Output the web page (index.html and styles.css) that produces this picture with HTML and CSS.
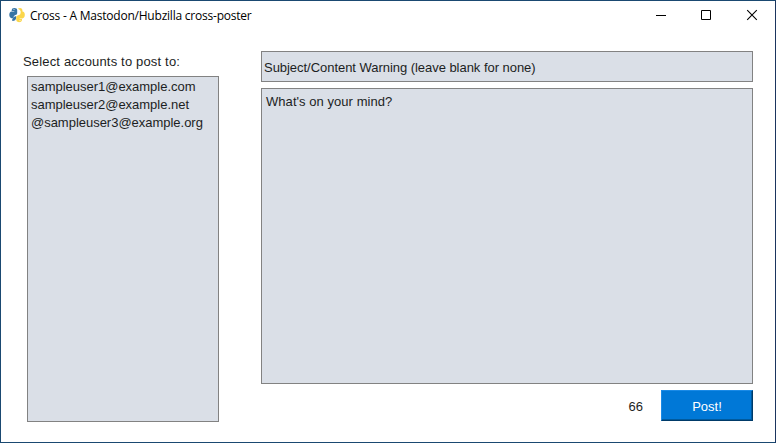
FILE: index.html
```html
<!DOCTYPE html>
<html lang="en">
<head>
<meta charset="utf-8">
<title>Cross - A Mastodon/Hubzilla cross-poster</title>
<link rel="stylesheet" href="styles.css">
</head>
<body>
<div class="window">
  <header class="titlebar">
    <svg class="logo" width="16" height="16" viewBox="0 0 16 16">
      <path fill="#3674a5" d="M2.7 3Q2.7 1 5.3 1Q8.2 1 8.2 3.2V6.2Q8.2 7.6 6.3 8Q4.6 8.6 4.2 11.2H2.6Q.3 10.8.3 7.8Q.3 4.8 2.7 4.5H5.3V4H2.7Z"/>
      <path fill="#3674a5" d="M3.3 12.2Q4.2 9.4 7.2 9V11.2Q6.7 13.8 4 14Q2.4 13.8 3.3 12.2Z"/>
      <path fill="#fbd64b" d="M8.8 1.8Q10.8.6 12.6 1.4Q13.7 2.2 13.5 4.4Q15.8 4.8 15.8 7.8Q15.8 11 13.4 11.4H10.6V12H13V13.2Q12.6 15.2 10 15.2Q7.2 15 7.2 13V10.2Q7.4 8.6 9.2 8.3Q11.8 7.8 11.6 6V4Q11 2.6 8.8 1.8Z"/>
      <circle cx="5" cy="2.6" r=".5" fill="#fff"/>
      <circle cx="11" cy="13.5" r=".5" fill="#fff"/>
    </svg>
    <h1 class="title">Cross - A Mastodon/Hubzilla cross-poster</h1>
    <div class="controls">
      <svg width="46" height="29" viewBox="0 0 46 29"><path d="M19 14.5H29" stroke="#000"/></svg>
      <svg width="46" height="29" viewBox="0 0 46 29"><path d="M18.5 9.5H27.5V18.5H18.5Z" fill="none" stroke="#000"/></svg>
      <svg width="46" height="29" viewBox="0 0 46 29"><path d="M18.2 9.2L27.8 18.8M27.8 9.2L18.2 18.8" stroke="#000" stroke-width="1.1"/></svg>
    </div>
  </header>
  <main class="content">
    <section class="accounts">
      <div class="label">Select accounts to post to:</div>
      <ul class="list">
        <li>sampleuser1@example.com</li>
        <li>sampleuser2@example.net</li>
        <li>@sampleuser3@example.org</li>
      </ul>
    </section>
    <section class="compose">
      <div class="field subject">Subject/Content Warning (leave blank for none)</div>
      <div class="field message">What's on your mind?</div>
      <div class="actions">
        <span class="count">66</span>
        <button class="post">Post!</button>
      </div>
    </section>
  </main>
</div>
</body>
</html>
```

FILE: styles.css
```css
* { box-sizing: border-box; }
body {
  margin: 0;
  font: 13px/18px "Liberation Sans", Arial, sans-serif;
  color: #1c1e23;
}
.window {
  width: 776px;
  height: 443px;
  border: 1px solid #1a4971;
  border-right-color: #1b355f;
  background: #fff;
  overflow: hidden;
}
.titlebar {
  display: flex;
  height: 29px;
  padding-left: 8px;
}
.logo { margin-top: 6px; }
.title {
  margin: 0 0 0 5px;
  font: 12px/29px "Open Sans", "Noto Sans", sans-serif;
  letter-spacing: -0.22px;
  color: #000;
  white-space: nowrap;
}
.controls { display: flex; margin-left: auto; }
.content {
  display: flex;
  justify-content: space-between;
  padding: 21px 22px 0;
}
.accounts { width: 196px; }
.label {
  height: 25px;
  padding-top: 2px;
  letter-spacing: 0.17px;
  white-space: nowrap;
}
.list {
  width: 192px;
  height: 346px;
  margin: 0 0 0 4px;
  padding: 1px 3px;
  list-style: none;
  border: 1px solid #828282;
  background: #dadfe7;
  letter-spacing: -0.02px;
  white-space: nowrap;
}
.compose { width: 492px; }
.field {
  border: 1px solid #828282;
  background: #dadfe7;
  white-space: nowrap;
}
.subject { height: 31px; padding: 7px 2px; letter-spacing: -0.04px; }
.message { height: 296px; margin-top: 6px; padding: 4px; letter-spacing: 0.05px; }
.actions {
  display: flex;
  justify-content: flex-end;
  align-items: center;
  gap: 18px;
  margin-top: 6px;
}
.count { padding-top: 2px; }
.post {
  width: 92px;
  height: 31px;
  padding: 2px 0 0;
  border: 1px solid;
  border-color: #1a8ae6 #003a68 #003a68 #1a8ae6;
  box-shadow: inset -1px -1px #005a9e;
  background: #0078d7;
  color: #fff;
  font: inherit;
}
```
